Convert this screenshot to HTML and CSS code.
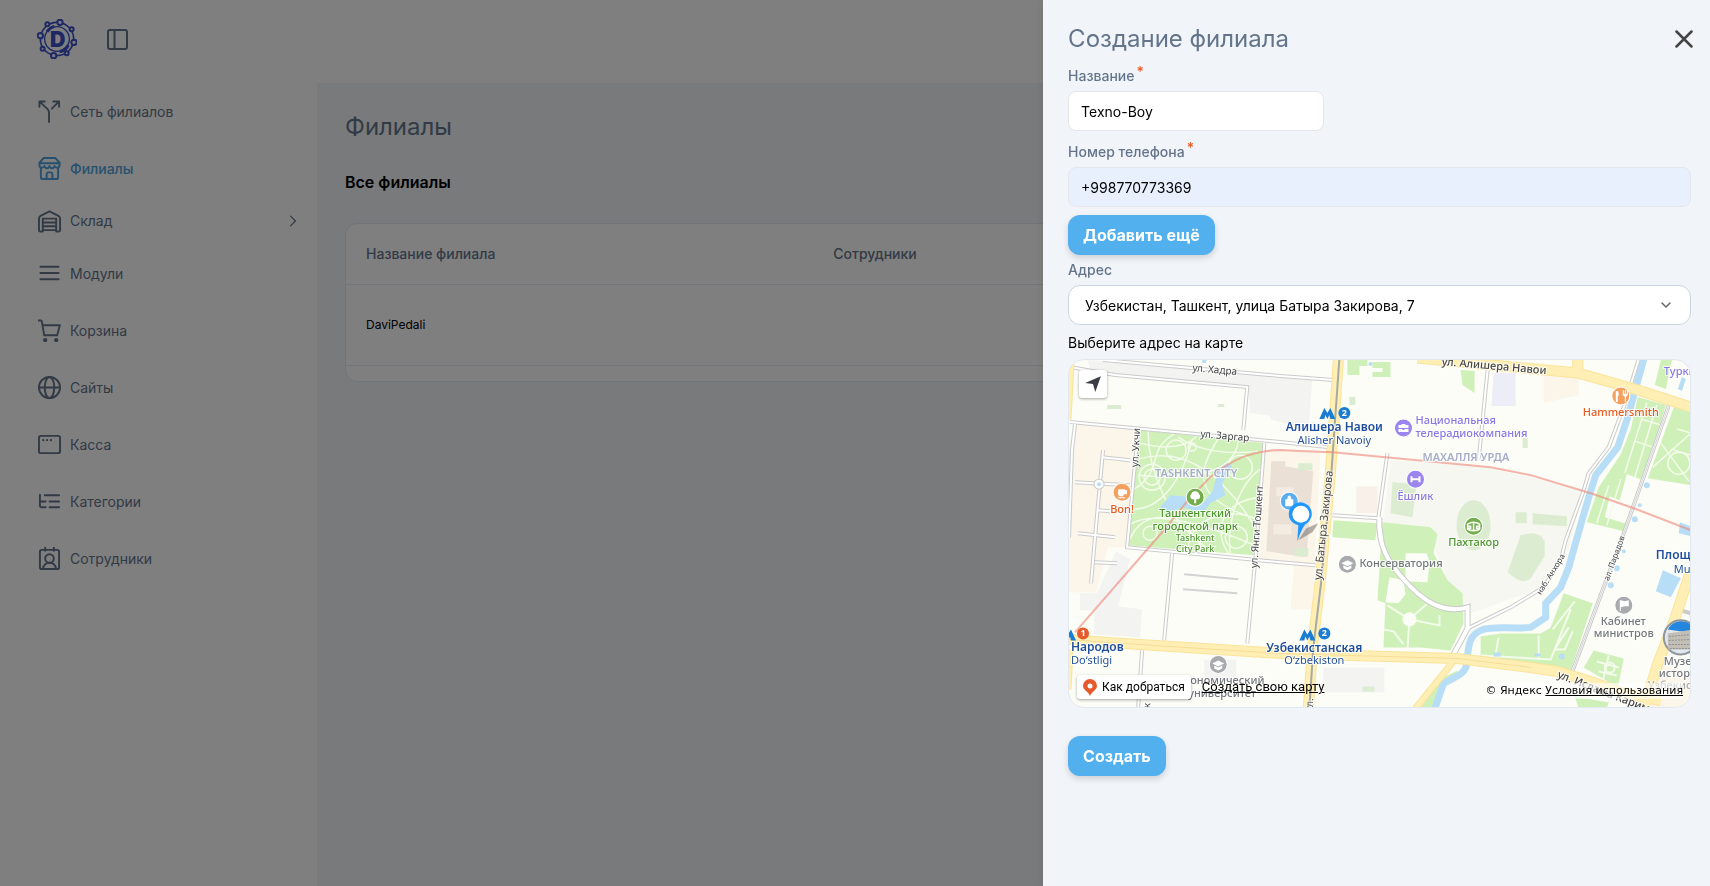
FILE: index.html
```html
<!DOCTYPE html>
<html lang="ru">
<head>
    <meta charset="UTF-8">
    <meta name="viewport" content="width=device-width, initial-scale=1.0">
    <title>Создание филиала</title>
    <link rel="stylesheet" href="styles.css">
</head>
<body>
    <div class="app">
        <header class="topbar">
            <svg class="logo" viewBox="0 0 120 120" fill="none" stroke="#3c50c8" stroke-width="5">
                <circle cx="60" cy="60" r="50"/>
                <circle cx="60" cy="60" r="37" stroke-width="4"/>
                <path d="M30 38a37 37 0 0 1 22-16M68 98a37 37 0 0 0 26-20" stroke-width="9"/>
                <g fill="#fff" stroke-width="6">
                    <circle cx="69" cy="10" r="8"/><circle cx="31" cy="16" r="6"/>
                    <circle cx="10" cy="50" r="8"/><circle cx="17" cy="89" r="6"/>
                    <circle cx="50" cy="110" r="8"/><circle cx="89" cy="103" r="6"/>
                    <circle cx="111" cy="70" r="8"/><circle cx="104" cy="31" r="6"/>
                </g>
                <text class="logo-letter" x="62" y="83" text-anchor="middle">D</text>
            </svg>
            <button class="icon-button" type="button" aria-label="Свернуть меню">
                <svg width="21" height="21" viewBox="0 0 21 21" fill="none" stroke="currentColor" stroke-width="2">
                    <rect x="1" y="1" width="19" height="19" rx="2"/>
                    <path d="M7.500 1v19"/>
                </svg>
            </button>
        </header>

        <nav class="sidebar">
            <a href="#" class="nav-item">
                <svg viewBox="0 0 24 24"><path d="M1.500 7V1.500H7M2 2l8 7.500c1.300 1.300 1.500 2 1.500 4V23M16 1.500h6V7M21.500 2l-7 7"/></svg>
                Сеть филиалов
            </a>
            <a href="#" class="nav-item active">
                <svg viewBox="0 0 24 24"><path d="M6 1h12l4.500 5v2.500c0 3-4.200 3.500-5.200 1-1.300 3-4 3-5.300 0-1.300 3-4 3-5.300 0-1 2.500-5.200 2-5.200-1V6zM1.500 6.500h21M3 11.500V21c0 1.300.7 2 2 2h14c1.300 0 2-.7 2-2v-9.500M9 23v-5c0-1.300.7-2 2-2h2c1.300 0 2 .7 2 2v5"/></svg>
                Филиалы
            </a>
            <a href="#" class="nav-item group">
                <svg viewBox="0 0 24 24"><path d="M1 21V9c0-1.500.5-2.200 1.700-2.900L12 1.500l9.300 4.600C22.500 6.800 23 7.500 23 9v12c0 1-.5 1.500-1.500 1.500H19V9H5v13.500H2.500C1.500 22.500 1 22 1 21zM5 13h14M5 17h14M5 21h14"/></svg>
                Склад
                <svg class="arrow" viewBox="0 0 10 10"><path d="M3 1l4 4-4 4"/></svg>
            </a>
            <a href="#" class="nav-item">
                <svg viewBox="0 0 24 24"><path d="M2.500 5h19M2.500 11.500h19M2.500 18h19"/></svg>
                Модули
            </a>
            <a href="#" class="nav-item">
                <svg viewBox="0 0 24 24"><path d="M.5 1.500h2.300c.7 0 1 .3 1.200 1L6.500 17H20l2.800-10.500H4.600"/><circle class="dot" cx="7.500" cy="22" r="2.200"/><circle class="dot" cx="19" cy="22" r="2.200"/></svg>
                Корзина
            </a>
            <a href="#" class="nav-item">
                <svg viewBox="0 0 24 24"><circle cx="12" cy="12" r="11"/><ellipse cx="12" cy="12" rx="5" ry="11"/><path d="M1 12h22"/></svg>
                Сайты
            </a>
            <a href="#" class="nav-item">
                <svg viewBox="0 0 24 24"><rect x="1" y="3" width="22" height="18" rx="2"/><circle class="dot" cx="5.500" cy="7.500" r="1.200"/><circle class="dot" cx="9.500" cy="7.500" r="1.200"/><circle class="dot" cx="13.500" cy="7.500" r="1.200"/></svg>
                Касса
            </a>
            <a href="#" class="nav-item">
                <svg viewBox="0 0 24 24"><path d="M7 5.500h15M2 5v11.500c0 1 .5 1.500 1.500 1.500H8M2 12h6M12 12h10M12 18h10"/></svg>
                Категории
            </a>
            <a href="#" class="nav-item">
                <svg viewBox="0 0 24 24"><rect x="2" y="3" width="20" height="20" rx="2"/><path d="M7.500.5V4M16.500.5V4M5 23c1-4.500 3.500-6.500 7-6.500s6 2 7 6.500"/><circle cx="12" cy="12" r="4.500"/></svg>
                Сотрудники
            </a>
        </nav>

        <main class="content">
            <h1>Филиалы</h1>
            <h2>Все филиалы</h2>
            <div class="card">
                <table>
                    <thead>
                        <tr><th>Название филиала</th><th>Сотрудники</th></tr>
                    </thead>
                    <tbody>
                        <tr><td>DaviPedali</td><td></td></tr>
                    </tbody>
                </table>
            </div>
        </main>
    </div>

    <div class="overlay"></div>

    <aside class="drawer" role="dialog" aria-labelledby="drawer-title">
        <div class="drawer-head">
            <h2 id="drawer-title">Создание филиала</h2>
            <button class="icon-button close" type="button" aria-label="Закрыть">
                <svg width="18" height="18" viewBox="0 0 18 18" fill="none" stroke="currentColor" stroke-width="2.500" stroke-linecap="round"><path d="M1.500 1.500l15 15M16.500 1.500l-15 15"/></svg>
            </button>
        </div>

        <form class="branch-form">
            <label for="name">Название<span class="required">*</span></label>
            <input class="short" type="text" id="name" value="Texno-Boy">

            <label for="phone">Номер телефона<span class="required">*</span></label>
            <input class="filled" type="tel" id="phone" value="+998770773369">

            <button class="btn add" type="button">Добавить ещё</button>

            <label for="address">Адрес</label>
            <div class="select-wrap">
                <select id="address">
                    <option>Узбекистан, Ташкент, улица Батыра Закирова, 7</option>
                </select>
                <svg viewBox="0 0 12 12" fill="none" stroke="#666" stroke-width="1.500" stroke-linecap="round"><path d="M2 4l4 4 4-4"/></svg>
            </div>

            <p class="map-title">Выберите адрес на карте</p>
            <div class="map">
                <svg class="map-canvas" viewBox="1 1 620 347" preserveAspectRatio="xMidYMid slice">
                    <!-- кварталы -->
                    <path fill="#f3f3f2" d="M20 1l192 15v42l-30-4-2-28L22 13zM202 18l42 3-4 51-38-12zM12 234h17l19-42 14 8-12 47 24 3-2 28-46-3v-24H12zM255 308h61v25h-61zM136 300h32v22h-32z"/>
                    <path fill="#fbf5ea" d="M9 65l61 6-10 117H40l-12 45H0V88zM197 90l55 3-8 157h-22l4-44-38-4zM475 16h35v20l-35 8zM590 305l32 10v34h-40z"/>
                    <path fill="#ebe0d6" d="M203 102h14v5l28 5-7 86-40-6z"/>
                    <path fill="#f4ece2" d="M208 128h17v9h-17zM205 165h18v10h-18z"/>
                    <path fill="#f6f7f0" d="M322 101l90 6 103 23-15 60-30 40-71 25-20-34-14-36 4-10-54-12z"/>
                    <path fill="#ecedf6" d="M425 14h22v33h-24z"/>
                    <path fill="#f8f0e9" d="M288 127h21v27h-21z"/>

                    <!-- зелень -->
                    <g fill="#d0f0ba">
                        <path d="M72 71l123 13-9 112-126-10z"/>
                        <path d="M279 1h20v6h-8v9h-12zM304 3h18v15h-18v-5h10V9h-10zM392 11l14 1v22l-12-8z"/>
                        <path d="M265 161l44 3-2 17-43-3zM314 163l48 5 7 7-4 19 14 27 15 13 1 30-13 27-30-3h-37l2-44-8-3z"/>
                        <path d="M569 38l28 8-22 75-17-6-9 33 8 15-2 9-37-9 12-35 22-33 10-25zM605 48l17 5v73l-43-7zM592 1h11l-6 29-11-4z"/>
                        <path d="M495 234l29 10-22 67-90-12v-22l20-3h40l10-6zM525 291l30 8-6 29-34-20zM389 311l-21 10-16 27h14l8-22 14-7zM506 337l34 6-2 6h-28z"/>
                    </g>
                    <g fill="#dbecd0">
                        <path d="M324 123l24 2-4 33-22-4zM447 153h11v11h-11zM464 154l34 3v10l-34-2zM281 38h6v8h-6zM39 46h14v4H39zM150 45h6v3h-6zM230 104h14v7h-14zM226 189h14v8h-14zM294 327h12v5h-12zM454 79h5v10h-5z"/>
                        <ellipse cx="405" cy="166" rx="17" ry="25"/>
                        <path d="M452 176q14-4 24 6v15l-14 22q-8 8-23-6z"/>
                        <path d="M452 178q10-8 22 0v6h-22z"/>
                    </g>
                    <path fill="#fcfdf6" d="M337 194h21l3 8-2 21-22-1zM321 218l14 3 2 14-7 9-13-1zM541 137l17 7-2 20-20-6z"/>

                    <!-- дорожки парков -->
                    <g fill="none" stroke="#f3fbea" stroke-width="1.500">
                        <path d="M72 84c30 8 50 2 58-9M70 100c40-12 80 6 118 70M66 130c30-18 12-40 40-55M64 150c30 0 50-30 60-70M62 165c20-12 60-6 122 20M62 180c12-30 50-30 70 6M80 72c0 40 20 90 60 118M150 80c-20 30-30 60 40 80M170 82c-4 30-40 40-100 34M190 92c-30 4-60 0-80-14M120 190c0-30 40-44 68-30M160 194c-16-26-6-50 30-56M192 110c-20 14-34 50-30 84"/>
                        <circle cx="108" cy="91" r="10"/><circle cx="84" cy="118" r="13"/><circle cx="84" cy="118" r="8"/><circle cx="168" cy="178" r="11"/><circle cx="124" cy="88" r="4"/><circle cx="82" cy="174" r="7"/><circle cx="172" cy="108" r="12"/>
                        <path d="M578 44l-22 70M588 46l-22 72M572 60l20 6M566 82l18 6M540 126l-12 38M552 120l-14 46M608 70l14 4M602 90l20 6M584 108l38-34M592 84l28 38"/>
                        <circle cx="610" cy="104" r="11"/>
                        <path d="M430 278l-4 22M470 276v22M412 296l70 4 20-50M484 270l22-28M500 268l-14 22h10l8-18M528 302l22 6M540 296l-6 26M530 312l18 4" stroke-width="2"/>
                        <path d="M341 260l-2 29M341 260l30 6v-10M341 260l-22-14M341 260l17-15M315 270l10 2 10 13" stroke-width="2"/>
                    </g>
                    <circle cx="341" cy="260" r="7" fill="#fcfdf6"/>
                    <circle cx="541" cy="308" r="5" fill="none" stroke="#f3fbea" stroke-width="2"/>

                    <!-- вода -->
                    <g fill="#b7def6">
                        <path d="M92 148l10-12 23 2 10 6 10-13 4-20 10-7 5 2-10 18 3 12-15 8-7 10-20-6-16 6z"/>
                        <path d="M594 211l18 8-10 19-15-6zM611 163l11 4v10l-12-3zM613 18l4 2-4 12-4-2zM425 293h7v4h-7zM466 294h6v3h-6zM134 1h4v3h-4z"/>
                        <circle cx="493" cy="297" r="3"/><circle cx="578" cy="126" r="3"/><circle cx="566" cy="160" r="3"/><circle cx="542" cy="226" r="3"/><circle cx="548" cy="209" r="3"/><circle cx="555" cy="192" r="2"/><circle cx="571" cy="146" r="2"/><circle cx="302" cy="5" r="2"/>
                    </g>
                    <path fill="none" stroke="#b7def6" stroke-width="7" d="M575 0l-16 58-10 30-22 28-7 22-11 38-9 32-8 20-15 16v14l-15 10c-20 2-38-2-50 3s-12 16-14 33c0 10-12 14-23 20l-9 26"/>

                    <!-- небольшие улицы -->
                    <g fill="none" stroke="#cbcbcb" stroke-width="4">
                        <path id="lanes" d="M35 91l-8 87-4 46M34 98l28 3M7 123l55 3M30 151l12 1M10 174l37 4M27 203l22 1M2 63l210 20 47 5M2 8l45 8 132 12-4 43M35 1l177 16 53 4M70 71l-10 107-1 10 153 15 35 3M196 84l-9 117-8 83M104 194l-8 87M74 291l-4 58M7 65l-3 26-3 87M319 94l-9 64 4 23M264 156l46 3M420 1l-10 100"/>
                        <path d="M570 0l-15 48-15 40-20 26-6 20-17 47-5 20-17 27-33 20-43 21M600 46l-45 128-51 137M609 250l13 4"/>
                        <path stroke-width="6" d="M311 158c-2 26 6 46 38 76 14 12 30 20 50 14v21l-14 26"/>
                    </g>
                    <g fill="none" stroke="#fff" stroke-width="2">
                        <use href="#lanes"/>
                        <path d="M570 0l-15 48-15 40-20 26-6 20-17 47-5 20-17 27-33 20-43 21M600 46l-45 128-51 137"/>
                        <path stroke-width="4" d="M311 158c-2 26 6 46 38 76 14 12 30 20 50 14v21l-14 26"/>
                    </g>
                    <path fill="none" stroke="#d5d5d5" d="M600 46l-45 128-51 137"/>
                    <path stroke="#d3d3d1" stroke-width="2" d="M116 215l54 5M115 230l54 4"/>
                    <circle cx="31" cy="125" r="5" fill="#fff" stroke="#cbcbcb"/><circle cx="31" cy="125" r="2" fill="#b7def6"/>

                    <!-- магистрали -->
                    <g fill="none" stroke="#fbe39a" stroke-width="11">
                        <path id="main-roads" d="M0 280l40 3 172 11 177 5 73 9 27 4 33 10 30 11 40 8M622 211l-20 60-13 33-14 45M270 0l-5 71-3 43-10 107-8 67-4 61M349-1l63 6 97 9 60 17 53 17M509 0v12"/>
                        <path stroke-width="7" d="M384 303l-37 46M3 5L0 60M2 290l-2 40"/>
                    </g>
                    <g fill="none" stroke="#ffefb5" stroke-width="9">
                        <use href="#main-roads"/>
                        <path stroke-width="5" d="M384 303l-37 46M3 5L0 60M2 290l-2 40"/>
                    </g>
                    <path fill="none" stroke="#f7dc98" d="M0 280l40 3 172 11 177 5 73 9"/>
                    <path fill="none" stroke="#a7aaa4" stroke-width="2" d="M271 0l-5 71-3 43-10 107-8 67-4 61"/>
                    <path fill="none" stroke="#f08378" stroke-opacity=".6" stroke-width="2" d="M7 273L94 173l26-32 22-23c20-16 40-27 70-27 20 1 40 2 50 2l160 15 40 8 60 18 43 15 57 22"/>

                    <!-- названия улиц -->
                    <g class="street">
                        <text transform="translate(124 12) rotate(5)">ул. Хадра</text>
                        <text transform="translate(132 78) rotate(5)">ул. Заргар</text>
                        <text transform="translate(70 108) rotate(-87)">ул. Укчи</text>
                        <text transform="translate(373 6) rotate(5)" class="street-big">ул. Алишера Навои</text>
                        <text transform="translate(189 209) rotate(-86)">ул. Янги Тошкент</text>
                        <text transform="translate(253 221) rotate(-84)" class="street-mid">ул. Батыра Закирова</text>
                        <text transform="translate(472 236) rotate(-58)" class="street-small">наб. Анхора</text>
                        <text transform="translate(540 222) rotate(-70)" class="street-small">ал. Парадов</text>
                        <text transform="translate(488 318) rotate(21)" class="street-big">ул. Ислама Каримова</text>
                        <text transform="translate(82 349) rotate(-86)">к</text>
                        <text transform="translate(244 352) rotate(-86)">ул.</text>
                    </g>

                    <!-- подписи -->
                    <g class="place">
                        <text x="87" y="118" class="area">TASHKENT CITY</text>
                        <text x="354" y="102" class="area">МАХАЛЛЯ УРДА</text>
                        <g class="green mid">
                            <text x="127" y="158">Ташкентский</text><text x="127" y="171">городской парк</text>
                            <text x="127" y="182" class="small">Tashkent</text><text x="127" y="193" class="small">City Park</text>
                            <text x="405" y="187">Пахтакор</text>
                        </g>
                        <g class="orange mid">
                            <text x="54" y="154">Bon!</text><text x="552" y="57">Hammersmith</text>
                        </g>
                        <g class="metro mid">
                            <text x="266" y="72">Алишера Навои</text><text x="266" y="85" class="light">Alisher Navoiy</text>
                            <text x="246" y="293">Узбекистанская</text><text x="246" y="305" class="light">Oʻzbekiston</text>
                        </g>
                        <g class="metro">
                            <text x="3" y="292">Народов</text><text x="3" y="305" class="light">Doʻstligi</text>
                            <text x="587" y="200">Площадь</text><text x="605" y="214" class="light">Mustaqillik</text>
                        </g>
                        <g class="purple">
                            <text x="347" y="65">Национальная</text><text x="347" y="78">телерадиокомпания</text>
                            <text x="329" y="141">Ёшлик</text><text x="595" y="16">Туркменистан</text>
                        </g>
                        <g class="grey">
                            <text x="291" y="208">Консерватория</text>
                            <text x="532" y="266">Кабинет</text><text x="525" y="278">министров</text>
                            <text x="595" y="306">Музей</text><text x="590" y="318">истории</text><text x="579" y="330" opacity=".6">Узбекистана</text>
                            <text x="122" y="325">ономический</text><text x="120" y="338">университет</text>
                        </g>
                    </g>

                    <!-- значки -->
                    <g stroke="#fff" stroke-width="1">
                        <circle cx="54" cy="133" r="9" fill="#f5a05f"/><circle cx="552" cy="37" r="9" fill="#f5a05f"/>
                        <circle cx="127" cy="138" r="9" fill="#74ad4b"/><circle cx="405" cy="167" r="9" fill="#74ad4b"/>
                        <circle cx="335" cy="69" r="9" fill="#9a86ee"/><circle cx="347" cy="120" r="9" fill="#9a86ee"/>
                        <circle cx="279" cy="205" r="9" fill="#a8aaad"/><circle cx="150" cy="305" r="9" fill="#a8aaad"/><circle cx="555" cy="246" r="9" fill="#a8aaad"/>
                        <circle cx="221" cy="142" r="9" fill="#5aaef0"/>
                    </g>
                    <g fill="#fff">
                        <path d="M50 130h7v1h2v4h-3l-1 2h-4l-1-2zM50 138h7v1h-7z"/>
                        <path d="M547 32h2q2 3 0 6v5h-2zM554 31h1v4h1v-4h1v4h1v-4h1v5l-2 2v5h-1v-5l-2-2z"/>
                        <path d="M127 132a4 4 0 0 1 4 3 3 3 0 0 1-1 5h-2v4h-2v-4h-2a3 3 0 0 1-1-5 4 4 0 0 1 4-3z"/>
                        <path d="M333 65h4v1h3v3h-10v-3h3zM330 70h4v1h2v-1h4v3h-10zM342 117h2v2h6v-2h2v6h-2v-2h-6v2h-2z"/>
                        <path d="M279 201l6 3-6 3-6-3zM275 206l4 2 4-2v3l-4 2-4-2zM150 301l6 3-6 3-6-3zM146 306l4 2 4-2v3l-4 2-4-2zM551 241h1l4 1 4-1v6h-4l-4 1v4h-1z"/>
                        <path d="M217 140h2c0-5 4-5 4 0h2v7h-8z"/>
                    </g>
                    <path fill="none" stroke="#fff" stroke-width="1.500" d="M399 165q6-4 12 0v5q-6 3-12 0zM399 167h3v2h-3M411 167h-3v2h3M405 164v7"/>
                    <g fill="#1a7cd2">
                        <path id="m" d="M251 60l5-11 3 5 3-5 5 11h-5l-1-4-2 4-2-4-1 4z"/>
                        <use href="#m" x="-20" y="221"/><use href="#m" x="-259" y="221"/>
                        <circle cx="276" cy="54" r="6"/><circle cx="256" cy="274" r="6"/><circle cx="15" cy="274" r="6" fill="#e65a2c"/>
                    </g>
                    <g class="badge"><text x="276" y="57">2</text><text x="256" y="277">2</text><text x="15" y="277">1</text></g>
                    <g>
                        <circle cx="612" cy="278" r="17" fill="#dfe6ec" stroke="#8e959c" stroke-width="2"/>
                        <path fill="#2586df" d="M599 270a15 15 0 0 1 26-1v5z"/>
                        <path fill="#c3bfb5" d="M599 274l26-4v20h-26z"/>
                        <path stroke="#8b929b" stroke-dasharray="2 1" d="M600 277l24-2M600 281l24-1M600 285h24M601 289h22"/>
                    </g>

                    <!-- метка -->
                    <path fill="#555" fill-opacity=".45" d="M230 181l8-12 12-5-6 9z"/>
                    <path fill="#1e98ff" d="M229 182l1-16a11.500 11.500 0 1 1 7-1q-4 5-8 17z"/>
                    <circle cx="232.500" cy="155" r="8.500" fill="#fff"/>
                </svg>

                <button class="map-button locate" type="button" aria-label="Моё местоположение">
                    <svg width="18" height="18" viewBox="0 0 16 16"><path fill="#3b3b45" d="M15 1L1 7l7 1 2 7z"/></svg>
                </button>
                <div class="map-links">
                    <button class="map-button route" type="button">
                        <svg width="14" height="17" viewBox="0 0 14 17"><path fill="#e65a2c" d="M7 0a7 7 0 0 1 7 7c0 4-5 5-7 10C5 12 0 11 0 7a7 7 0 0 1 7-7z"/><circle cx="7" cy="7" r="2.500" fill="#fff"/></svg>
                        Как добраться
                    </button>
                    <a href="#" class="own-map">Создать свою карту</a>
                    <span class="copyright">© Яндекс <a href="#">Условия использования</a></span>
                </div>
            </div>

            <button class="btn" type="submit">Создать</button>
        </form>
    </aside>
</body>
</html>
```
FILE: styles.css
```css
* {
    box-sizing: border-box;
}

body {
    margin: 0;
    font-family: Inter, "Liberation Sans", sans-serif;
    font-size: 14px;
    line-height: 20px;
    color: #000;
    background-color: #fff;
}

h1,
h2,
p {
    margin: 0;
}

button,
input,
select {
    font-family: inherit;
    font-size: 14px;
}

/* Каркас страницы */
.app {
    display: grid;
    grid-template-columns: 317px 1fr;
    grid-template-rows: 83px 1fr;
    min-height: 100vh;
}

.topbar {
    grid-column: 1 / -1;
    display: flex;
    align-items: center;
    gap: 30px;
    padding: 0 37px;
    height: 78px;
}

.logo {
    width: 40px;
    height: 40px;
}

.logo-letter {
    font-size: 64px;
    font-weight: 900;
    fill: #3c50c8;
    stroke: none;
}

.icon-button {
    display: flex;
    padding: 0;
    border: none;
    background: none;
    color: #64748b;
    cursor: pointer;
}

/* Боковое меню */
.nav-item {
    display: flex;
    align-items: center;
    gap: 9px;
    height: 57px;
    padding: 0 18px 0 38px;
    color: #64748b;
    text-decoration: none;
}

.nav-item.group {
    height: 48px;
}

.nav-item svg {
    width: 23px;
    height: 23px;
    fill: none;
    stroke: currentColor;
    stroke-width: 2;
    stroke-linecap: round;
    stroke-linejoin: round;
}

.nav-item .dot {
    fill: currentColor;
    stroke: none;
}

.nav-item .arrow {
    width: 12px;
    height: 12px;
    margin-left: auto;
    stroke-width: 1;
}

.nav-item.active {
    color: #4ca0dc;
    font-weight: 500;
}

/* Основная часть */
.content {
    padding: 28px;
    background-color: #f1f5f9;
}

.content h1,
.drawer-head h2 {
    font-size: 24px;
    line-height: 32px;
    font-weight: 400;
    color: #64748b;
}

.content h2 {
    margin: 27px 0 29px;
    font-size: 16px;
    line-height: 24px;
    font-weight: 600;
}

.card {
    padding-bottom: 15px;
    border: 1px solid #e2e8f0;
    border-radius: 12px;
    background-color: #fff;
}

table {
    width: 100%;
    border-collapse: collapse;
}

th,
td {
    height: 60px;
    padding: 0 20px;
    border-bottom: 1px solid #e2e8f0;
    text-align: left;
    font-weight: 500;
    color: #64748b;
}

th:first-child {
    width: 35%;
}

td {
    height: 81px;
    font-size: 12px;
    font-weight: 400;
    color: #000;
}

.overlay {
    position: fixed;
    inset: 0;
    background-color: rgba(0, 0, 0, 0.5);
}

/* Выезжающая панель */
.drawer {
    position: fixed;
    top: 0;
    right: 0;
    bottom: 0;
    width: 39%;
    padding: 23px 19px 23px 25px;
    overflow-y: auto;
    background-color: #f1f5f9;
    box-shadow: 0 0 10px rgba(0, 0, 0, 0.1);
}

.drawer-head {
    display: flex;
    justify-content: space-between;
    align-items: center;
    margin-bottom: 11px;
}

.close {
    margin-right: -2px;
    color: #444;
}

.branch-form {
    display: flex;
    flex-direction: column;
    align-items: flex-start;
}

label {
    margin-bottom: 5px;
    color: #64748b;
    font-weight: 500;
}

.required {
    margin-left: 2px;
    line-height: 12px;
    vertical-align: top;
    color: #f05a28;
}

input,
select {
    width: 100%;
    height: 40px;
    padding: 0 12px;
    border: 1px solid #e5e7eb;
    border-radius: 8px;
    background-color: #fff;
    color: #000;
}

input {
    margin-bottom: 11px;
}

input.short {
    width: 256px;
}

input.filled {
    margin-bottom: 8px;
    background-color: #e8f0fe;
}

.btn {
    height: 40px;
    padding: 0 15px;
    border: none;
    border-radius: 12px;
    background-color: #51b0ed;
    color: #fff;
    font-size: 16px;
    font-weight: 700;
    box-shadow: 0 3px 6px rgba(0, 0, 0, 0.15);
    cursor: pointer;
}

.btn.add {
    margin-bottom: 5px;
}

.select-wrap {
    position: relative;
    width: 100%;
}

select {
    appearance: none;
    padding: 0 16px;
    border-color: #cbd5e1;
    border-radius: 12px;
}

.select-wrap svg {
    position: absolute;
    top: 14px;
    right: 19px;
    width: 12px;
    height: 12px;
    pointer-events: none;
}

.map-title {
    margin: 8px 0 6px;
}

/* Карта */
.map {
    position: relative;
    width: 100%;
    margin-bottom: 28px;
    border: 1px solid #e2e8f0;
    border-radius: 16px;
    overflow: hidden;
    background-color: #fcfdf6;
}

.map-canvas {
    display: block;
    width: 100%;
    font-family: "Noto Sans", "Open Sans", sans-serif;
}

.map-canvas text {
    paint-order: stroke;
    stroke: #fff;
    stroke-width: 2px;
    stroke-opacity: 0.8;
}

.street {
    font-size: 10px;
    fill: #444;
}

.street-mid {
    font-size: 11px;
}

.street-big {
    font-size: 11px;
    font-weight: 500;
}

.street-small {
    font-size: 8px;
}

.place {
    font-size: 11px;
    font-weight: 600;
}

.mid,
.badge {
    text-anchor: middle;
}

.small {
    font-size: 9px;
}

.area {
    fill: #a7adc6;
}

.green {
    fill: #4c962c;
    font-weight: 500;
}

.orange {
    fill: #e65a1f;
    font-weight: 500;
}

.metro {
    font-size: 12px;
    fill: #1f4f9c;
}

.metro .light {
    font-size: 11px;
    font-weight: 400;
}

.purple {
    fill: #8b78e6;
    font-weight: 500;
}

.grey {
    fill: #75787c;
    font-weight: 500;
}

.map-canvas .badge text {
    font-size: 9px;
    font-weight: 700;
    fill: #fff;
    stroke: none;
}

.map-button {
    display: flex;
    align-items: center;
    justify-content: center;
    border: none;
    border-radius: 3px;
    background-color: #fff;
    box-shadow: 0 1px 3px rgba(0, 0, 0, 0.35);
    cursor: pointer;
}

.locate {
    position: absolute;
    top: 10px;
    left: 10px;
    width: 28px;
    height: 28px;
    padding: 0;
}

.map-links {
    position: absolute;
    left: 8px;
    right: 7px;
    bottom: 8px;
    display: flex;
    align-items: flex-end;
}

.route {
    gap: 5px;
    height: 24px;
    padding: 0 6px;
    font-family: Roboto, "Liberation Sans", sans-serif;
    font-size: 12px;
}

.own-map {
    margin-left: 11px;
    color: #000;
    font-family: Roboto, "Liberation Sans", sans-serif;
    font-size: 13px;
    line-height: 24px;
}

.copyright {
    margin-left: auto;
    font-family: "DejaVu Sans", sans-serif;
    font-size: 11px;
    line-height: 16px;
    background-color: rgba(255, 255, 255, 0.6);
}

.copyright a {
    color: #000;
}
```
